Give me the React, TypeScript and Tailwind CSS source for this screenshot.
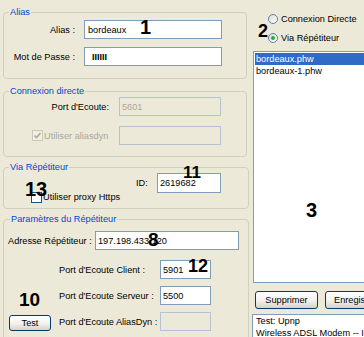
import React from "react";

function Num({ children, className }: { children: React.ReactNode; className: string }) {
  return (
    <span className={"absolute font-['Liberation_Sans',Arial,sans-serif] font-bold leading-none text-black " + className}>
      {children}
    </span>
  );
}

function CheckBox({ checked, disabled }: { checked?: boolean; disabled?: boolean }) {
  return (
    <span
      className={
        "flex h-[11px] w-[11px] shrink-0 items-center justify-center border " +
        (disabled ? "border-[#CAC8BB] bg-[#F1EFE2]" : "border-[#1C5180] bg-white")
      }
    >
      {checked && (
        <svg width="9" height="9" viewBox="0 0 9 9">
          <polyline points="1.5,4.5 3.5,6.5 7.5,2" fill="none" stroke={disabled ? "#ACA899" : "#21A121"} strokeWidth="1.6" />
        </svg>
      )}
    </span>
  );
}

function Radio({ checked }: { checked?: boolean }) {
  return (
    <span className="flex h-[10px] w-[10px] shrink-0 items-center justify-center rounded-full border border-[#5A83B0] bg-linear-to-br from-[#DCDCD7] to-white">
      {checked && <span className="h-[4px] w-[4px] rounded-full bg-[#2FA82F]" />}
    </span>
  );
}

const inputCls = "flex items-center border border-[#7F9DB9] bg-white";
const disabledCls = "flex items-center border border-[#B5C3D3] bg-[#ECE9D8] text-[#ACA899]";
const btnCls =
  "flex items-center justify-center rounded-[3px] border border-[#003C74] bg-linear-to-b from-white via-[#F3F3EF] to-[#D8D3C8] text-black";

export default function App() {
  return (
    <div className="relative flex h-[337px] w-[364px] overflow-hidden bg-[#ECE9D8] font-['Liberation_Sans',Arial,sans-serif] text-[9.2px] leading-[12px] text-black">
      {/* Left column */}
      <div className="flex w-[250px] shrink-0 flex-col pl-[3px]">
        {/* Alias */}
        <fieldset className="mt-[6px] w-[244px] rounded-[4px] border border-[#D0D0BF] px-0 pt-[2px] pb-[12px]">
          <legend className="ml-[5px] px-[1px] leading-[12px] text-[#0046D5]">Alias</legend>
          <div className="flex h-[19px] items-center">
            <span className="w-[71px] text-right">Alias :</span>
            <div className={inputCls + " ml-[9px] h-[19px] w-[138px] pl-[3px]"}>bordeaux</div>
          </div>
          <div className="mt-[8px] flex h-[19px] items-center">
            <span className="w-[71px] text-right">Mot de Passe :</span>
            <div className={inputCls + " ml-[9px] h-[19px] w-[138px] pl-[7px] font-bold text-[9px]"}>IIIIII</div>
          </div>
        </fieldset>

        {/* Connexion directe */}
        <fieldset className="mt-[6px] w-[244px] rounded-[4px] border border-[#D0D0BF] px-0 pt-0 pb-[11px]">
          <legend className="ml-[5px] px-[1px] leading-[12px] text-[#0046D5]">Connexion directe</legend>
          <div className="flex h-[19px] items-center">
            <span className="w-[105px] text-right">Port d'Ecoute:</span>
            <div className={disabledCls + " ml-[10px] h-[19px] w-[102px] pl-[2px]"}>5601</div>
          </div>
          <div className="mt-[10px] flex h-[19px] items-center">
            <div className="flex w-[115px] items-center pl-[28px]">
              <CheckBox checked disabled />
              <span className="ml-[1px] text-[#ACA899]">Utiliser aliasdyn</span>
            </div>
            <div className={disabledCls + " h-[19px] w-[102px]"} />
          </div>
        </fieldset>

        {/* Via Répétiteur */}
        <fieldset className="mt-[4px] w-[246px] rounded-[4px] border border-[#D0D0BF] px-0 pt-0 pb-[5px]">
          <legend className="ml-[5px] px-[1px] leading-[12px] text-[#0046D5]">Via Répétiteur</legend>
          <div className="flex h-[20px] items-center">
            <span className="ml-[132px] w-[21px]">ID:</span>
            <div className={inputCls + " h-[20px] w-[64px] pl-[2px]"}>2619682</div>
          </div>
          <div className="-mt-[2px] flex h-[12px] items-center pl-[27px]">
            <CheckBox />
            <span className="ml-[1px]">Utiliser proxy Https</span>
          </div>
        </fieldset>

        {/* Paramètres du Répétiteur */}
        <fieldset className="mt-[4px] w-[246px] rounded-[4px] border border-[#D0D0BF] px-0 pt-[6px] pb-[20px]">
          <legend className="ml-[6px] px-[1px] leading-[12px] text-[#0046D5]">Paramètres du Répétiteur</legend>
          <div className="flex h-[19px] items-center pl-[4px]">
            <span className="w-[87px]">Adresse Répétiteur :</span>
            <div className={inputCls + " h-[19px] w-[144px] pl-[2px]"}>197.198.433.120</div>
          </div>
          <div className="mt-[10px] flex items-end">
            <div className="w-[55px] pl-[5px]">
              <div className={btnCls + " h-[16px] w-[42px]"}>Test</div>
            </div>
            <div className="flex flex-col gap-[7px]">
              <div className="flex h-[19px] items-center">
                <span className="w-[101px]">Port d'Ecoute Client :</span>
                <div className={inputCls + " h-[19px] w-[51px] pl-[2px]"}>5901</div>
              </div>
              <div className="flex h-[19px] items-center">
                <span className="w-[101px]">Port d'Ecoute Serveur :</span>
                <div className={inputCls + " h-[19px] w-[51px] pl-[2px]"}>5500</div>
              </div>
              <div className="flex h-[19px] items-center">
                <span className="w-[101px]">Port d'Ecoute AliasDyn :</span>
                <div className={disabledCls + " h-[19px] w-[51px]"} />
              </div>
            </div>
          </div>
        </fieldset>
      </div>

      {/* Right column */}
      <div className="flex min-w-0 flex-1 flex-col pt-[13px]">
        <div className="flex h-[13px] items-center pl-[18px]">
          <Radio />
          <span className="ml-[3px] whitespace-nowrap">Connexion Directe</span>
        </div>
        <div className="mt-[7px] flex h-[13px] items-center pl-[18px]">
          <Radio checked />
          <span className="ml-[3px] whitespace-nowrap">Via Répétiteur</span>
        </div>
        <div className="mt-[7px] ml-[3px] h-[232px] w-[130px] shrink-0 border border-[#7F9DB9] bg-white p-[1px]">
          <div className="bg-[#316AC5] pl-[1px] text-white">bordeaux.phw</div>
          <div className="pl-[1px]">bordeaux-1.phw</div>
        </div>
        <div className="mt-[8px] ml-[5px] flex shrink-0 gap-[7px]">
          <div className={btnCls + " h-[18px] w-[63px] shrink-0"}>Supprimer</div>
          <div className={btnCls + " h-[18px] w-[63px] shrink-0"}>Enregistrer</div>
        </div>
        <div className="mt-[5px] ml-[2px] h-[40px] w-[130px] shrink-0 border border-[#7F9DB9] bg-white px-[3px] leading-[12px] whitespace-nowrap">
          <div>Test: Upnp</div>
          <div>Wireless ADSL Modem -- Internet</div>
        </div>
      </div>

      {/* Annotation numbers */}
      <Num className="left-[140px] top-[17px] text-[20px]">1</Num>
      <Num className="left-[258px] top-[22px] text-[18px]">2</Num>
      <Num className="left-[306px] top-[200px] text-[20px]">3</Num>
      <Num className="left-[148px] top-[230px] text-[19px]">8</Num>
      <Num className="left-[19px] top-[290px] text-[19px]">10</Num>
      <Num className="left-[183px] top-[164px] text-[17px]">11</Num>
      <Num className="left-[188px] top-[257px] text-[18px]">12</Num>
      <Num className="left-[25px] top-[179px] text-[20px]">13</Num>
    </div>
  );
}
